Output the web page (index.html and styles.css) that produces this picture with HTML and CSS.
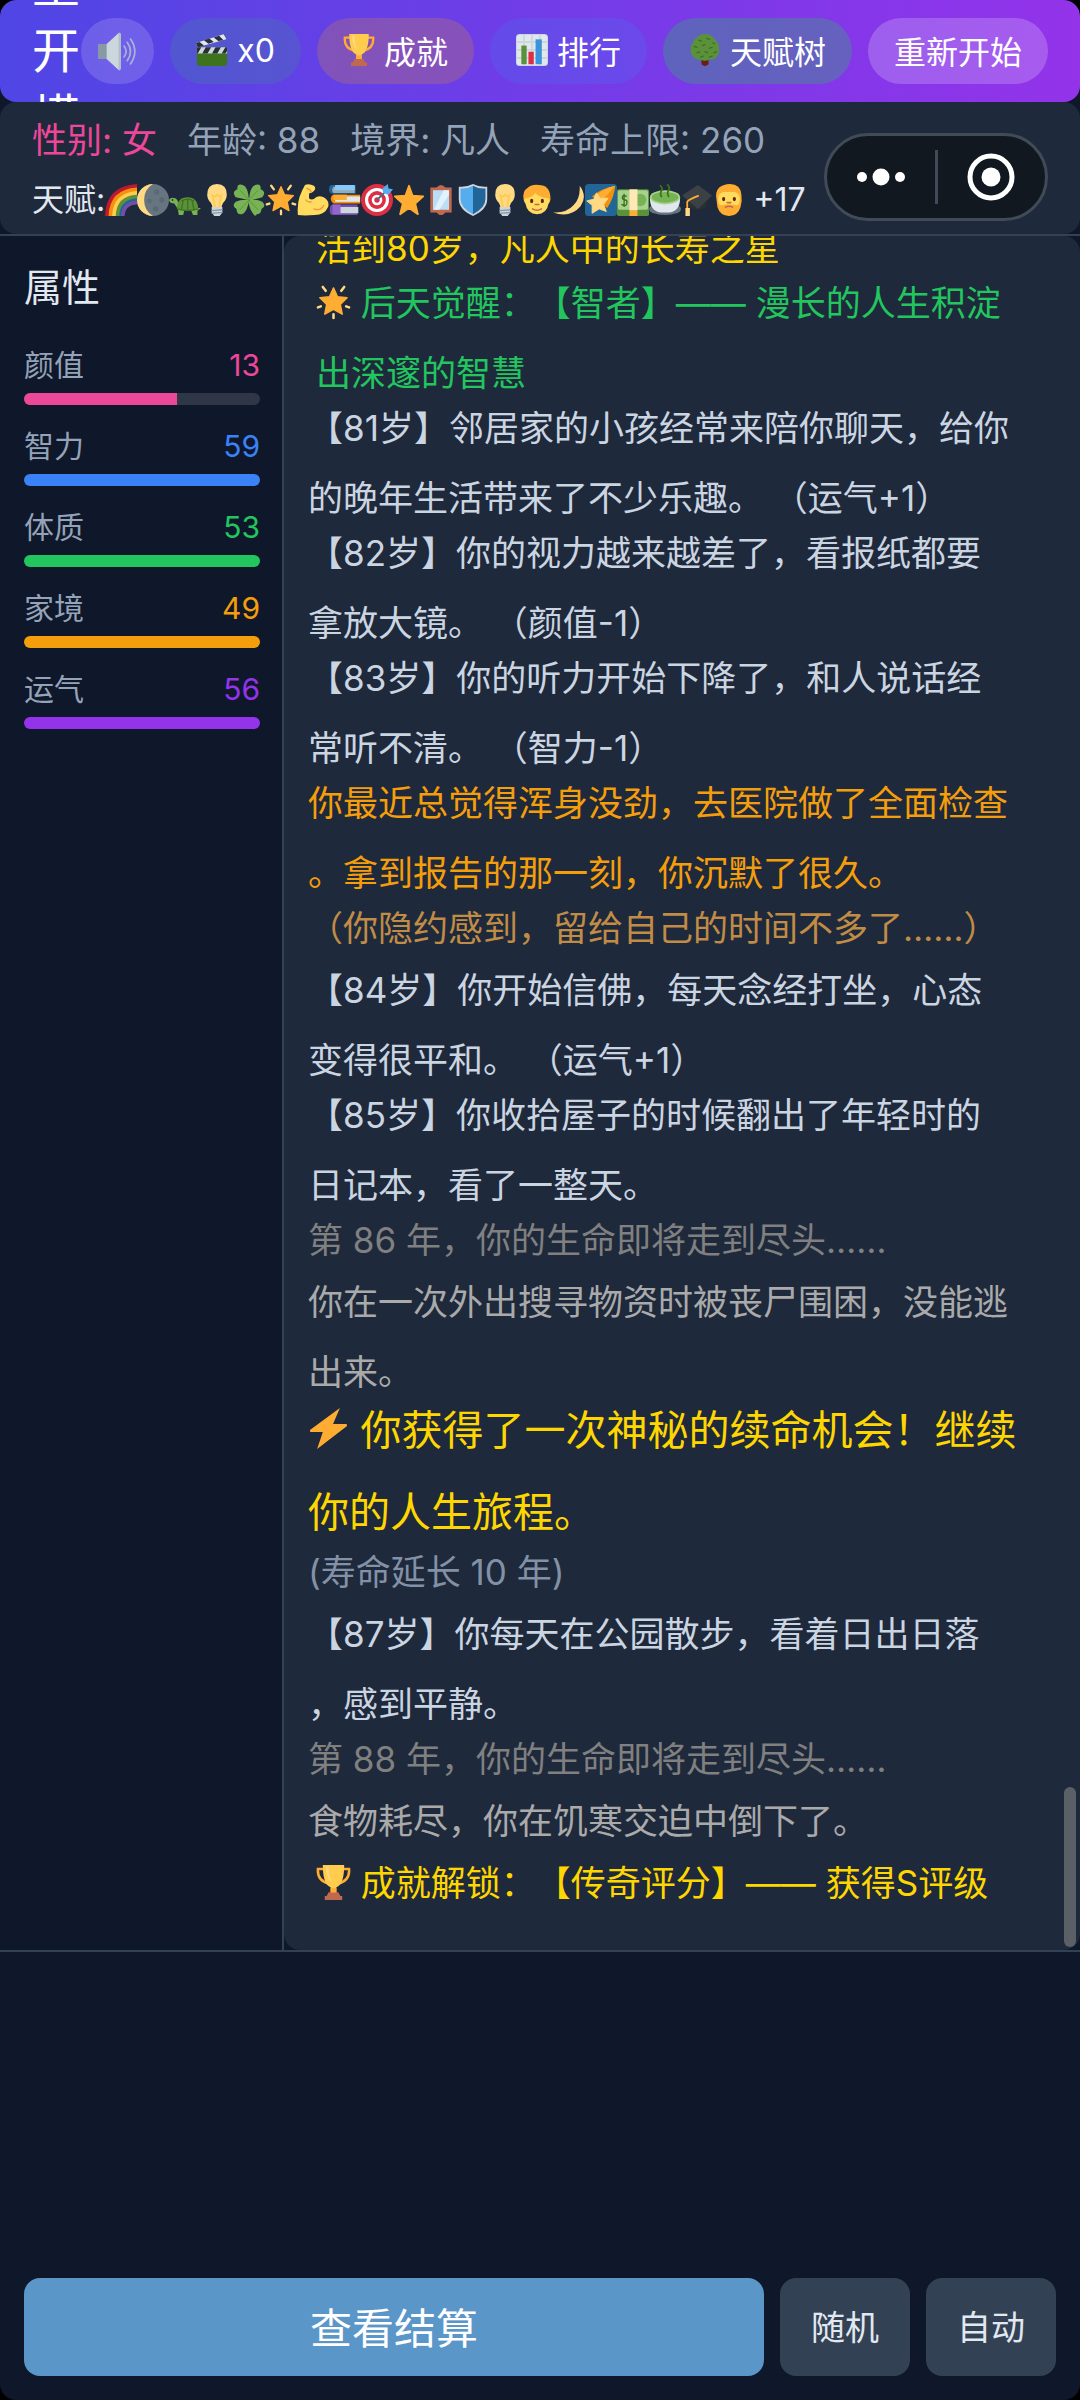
FILE: index.html
```html
<!DOCTYPE html>
<html lang="zh-CN">
<head>
    <meta charset="UTF-8">
    <meta name="viewport" content="width=device-width, initial-scale=1.0">
    <title>人生重开模拟器</title>
    <link rel="stylesheet" href="styles.css">
</head>
<body>
    <!-- 图标库 -->
    <svg class="sprite" aria-hidden="true">
        <symbol id="i-sound" viewBox="0 0 36 36">
            <path fill="#8899A6" d="M1 11h9v14H1q-1 0-1-1V12q0-1 1-1z"/>
            <path fill="#CCD6DD" d="M8 11L19 1q2-1 2 2v30q0 3-2 2L8 25z"/>
            <path fill="#B0BEC8" d="M19 1q2-1 2 2v30q0 3-2 2z"/>
            <path fill="none" stroke="#A9B1D6" stroke-width="1.6" stroke-linecap="round" d="M24 13q4 5 0 10M27 9.500q6 8.500 0 17M30 6.500q8 11.500 0 23"/>
        </symbol>
        <symbol id="i-clapper" viewBox="0 0 36 36">
            <path fill="#3E721D" d="M1 15h34v17q0 4-4 4H5q-4 0-4-4z"/>
            <path fill="#CCD6DD" d="M1 15h34v7H1z"/>
            <path fill="#292F33" d="M1 15h5l-4 7H1zM11 15h6l-4 7H7zM22 15h6l-4 7h-6zM33 15h2v4l-2 3h-4z"/>
            <path fill="#E1E8ED" d="M0 10L32 0l2 6L2 15z"/>
            <path fill="#292F33" d="M0 10l4-1 5 4-6 2-1 0zM9 7l6-2 5 4-6 2zM20 4l6-2 5 5-6 1zM31 0l1 0 2 5z"/>
        </symbol>
        <symbol id="i-trophy" viewBox="0 0 36 36">
            <path fill="none" stroke="#FFAC33" stroke-width="2.600" d="M9 4H2q-1 12 11 15M27 4h7q1 12-11 15"/>
            <path fill="#FFCC4D" d="M7 0h22q0 20-8 23v6h-6v-6Q7 20 7 0z"/>
            <path fill="#FFD983" d="M10 2h3q0 10 3 16-5-4-6-16z"/>
            <path fill="#C1694F" d="M13 28h10l2 4h2v4H9v-4h2z"/>
            <path fill="#FFAC33" d="M15 24h6v4h-6z"/>
        </symbol>
        <symbol id="i-chart" viewBox="0 0 36 36">
            <rect width="36" height="36" rx="4" fill="#CCD6DD"/>
            <rect x="1" y="1" width="34" height="34" rx="3" fill="#E1E8ED"/>
            <path stroke="#CCD6DD" stroke-width="2" d="M0 9h36M0 18h36M0 27h36M9 0v36M18 0v36M27 0v36"/>
            <rect x="6" y="13" width="6" height="21" fill="#5C913B"/>
            <rect x="14" y="20" width="6" height="14" fill="#DD2E44"/>
            <rect x="22" y="6" width="7" height="28" fill="#3B94D9"/>
        </symbol>
        <symbol id="i-tree" viewBox="0 0 36 36">
            <path fill="#662113" d="M14 28h8v6q-4 4-8 0z"/>
            <path fill="#5C913B" d="M18 0q7 0 11 6 6 6 5 14-2 9-11 9-5 2-10 0-9 0-11-9Q1 12 7 6q4-6 11-6z"/>
            <path fill="none" stroke="#3E721D" stroke-width="1.500" stroke-linecap="round" d="M11 7l3 1M20 5l3 1M27 10l2 1M6 14l3 1M15 13l3-1M23 16l3-1M9 21l3-1M18 20l3 1M28 21l3-1M13 26l3-1M23 26l3-1"/>
        </symbol>
        <symbol id="i-rainbow" viewBox="0 0 36 36">
            <path fill="#BE1931" d="M0 36Q1 2 36 0v36z"/>
            <path fill="#F4900C" d="M4 36Q5 6 36 4v32z"/>
            <path fill="#FFCC4D" d="M8 36Q9 10 36 8v28z"/>
            <path fill="#5C913B" d="M12 36q1-23 24-24v24z"/>
            <path fill="#226699" d="M16 36q1-19 20-20v20z"/>
            <path fill="#744EAA" d="M18 36q1-17 18-17v17z"/>
            <path fill="#1e293b" d="M22 36q1-13 14-13v13z"/>
        </symbol>
        <symbol id="i-moon" viewBox="0 0 36 36">
            <circle cx="18" cy="18" r="18" fill="#66757F"/>
            <path fill="#FFD983" d="M18 0a18 18 0 0 0 0 36Q8 30 8 18T18 0z"/>
            <circle cx="22" cy="9" r="3" fill="#5B6876"/><circle cx="14" cy="19" r="2.500" fill="#5B6876"/>
            <circle cx="28" cy="18" r="3" fill="#5B6876"/><circle cx="21" cy="28" r="3" fill="#5B6876"/>
        </symbol>
        <symbol id="i-turtle" viewBox="0 0 36 36">
            <path fill="#77B255" d="M7 16q3 1 4 8l19 3 6 0-4 3 0 5h-5l-2-5H17l-1 5h-5l-1-7q-3-4-4-6-5 0-6-4 2-4 7-2z"/>
            <path fill="#5C913B" d="M9 28q0-13 12-13 11 0 12 13-12 4-24 0z"/>
            <path fill="none" stroke="#3E721D" stroke-width="1.500" d="M14 19q7-4 14 0M16 18l-2 11M21 16v14M26 18l2 11M9 28q12 4 24 0"/>
            <circle cx="4" cy="18" r="1" fill="#292F33"/>
        </symbol>
        <symbol id="i-bulb" viewBox="0 0 36 36">
            <path fill="#FFD983" d="M18 0q11 0 11 12 0 5-4 9-2 3-2 6H13q0-3-2-6-4-4-4-9Q7 0 18 0z"/>
            <path fill="none" stroke="#FFCC4D" stroke-width="2" d="M16 27l-3-14q3 2 5-1 2 3 5 1l-3 14"/>
            <path fill="#CCD6DD" d="M12 26h12v6l-3 4h-6l-3-4z"/>
            <path stroke="#8899A6" stroke-width="1.500" d="M12 30l12-1M12 33l12-1"/>
        </symbol>
        <symbol id="i-clover" viewBox="0 0 36 36">
            <path fill="none" stroke="#77B255" stroke-width="3" stroke-linecap="round" d="M18 17q2 12 7 17"/>
            <path fill="#77B255" d="M18 18Q12 17 3 15q-5-6 2-9-1-7 6-5 6 2 7 17zM18 18Q19 3 25 1q7-2 6 5 7 3 2 9-9 3-15 3zM18 18Q9 17 3 20q-5 5 1 8 0 7 6 6 6-2 8-16zM18 18q9-1 15 2 5 5-1 8 0 6-6 6-6-4-8-16z"/>
            <path fill="none" stroke="#5C913B" stroke-width="1" d="M8 7l10 11 10-11M8 29l10-11 10 11"/>
        </symbol>
        <symbol id="i-glow" viewBox="0 0 36 36">
            <path fill="#FFAC33" d="M18 3l4 9 10 1-7 7 2 10-9-5-9 5 2-10-7-7 10-1z" stroke="#FFAC33" stroke-width="1.500" stroke-linejoin="round"/>
            <path fill="none" stroke="#FFD983" stroke-width="2.600" stroke-linecap="round" d="M7 2l3 4M29 2l-3 4M2 23l3-1M34 23l-3-1M18 30v4"/>
        </symbol>
        <symbol id="i-arm" viewBox="0 0 36 36">
            <path fill="#FFDC5D" d="M9 1q5-2 10 1 3 3 0 6-3 3-5 2-1 4 0 7 3 1 5 0 4-5 11-2 7 4 5 11-4 9-15 9-12 1-19 0Q0 22 3 14 6 6 9 1z"/>
            <path fill="none" stroke="#EF9645" stroke-width="1.500" stroke-linecap="round" d="M10 18q2 3 6 2M19 28q8 3 11-4M11 5q4 1 5 4"/>
        </symbol>
        <symbol id="i-books" viewBox="0 0 36 36">
            <path fill="#226699" d="M3 1h27v10H4q-4 0-4-5t3-5z"/><path fill="#99AAB5" d="M5 3h24v7H5q-3-3 0-7z"/><path fill="#88C9F9" d="M7 1h22v6H6z"/>
            <path fill="#F4900C" d="M5 12h30v10H6q-3 0-4-5 0-4 3-5z"/><path fill="#E1E8ED" d="M7 14h28v6H7z"/><path fill="#FFAC33" d="M5 12h15v6H5z"/>
            <path fill="#744EAA" d="M4 23h28v12H4q-4-1-3-7 0-4 3-5z"/><path fill="#CCD6DD" d="M7 26h26v7H7q-3-3 0-7z"/><path fill="#9266CC" d="M4 23h9v11H4z"/>
        </symbol>
        <symbol id="i-target" viewBox="0 0 36 36">
            <circle cx="18" cy="18" r="18" fill="#DD2E44"/><circle cx="18" cy="18" r="13.500" fill="#fff"/>
            <circle cx="18" cy="18" r="10" fill="#DD2E44"/><circle cx="18" cy="18" r="6" fill="#fff"/><circle cx="18" cy="18" r="3" fill="#DD2E44"/>
            <path stroke="#50698A" stroke-width="2" d="M18 18L29 7"/>
            <path fill="#55ACEE" d="M25 10l-1-5 6-5 1 5 5 1-5 6z"/>
        </symbol>
        <symbol id="i-star" viewBox="0 0 36 36">
            <path fill="#FFAC33" stroke="#FFAC33" stroke-width="2" stroke-linejoin="round" d="M18 2l4 11 12 1-9 8 3 12-10-7-10 7 3-12-9-8 12-1z"/>
        </symbol>
        <symbol id="i-mirror" viewBox="0 0 36 36">
            <path fill="#C1694F" d="M6 4h7q5-6 10 0h7v28h-7q-5 6-10 0H6z"/>
            <path fill="#BBDDF5" d="M9 7h18v22H9z"/>
            <path fill="#E1F2FC" d="M21 7h6v5L16 29h-6z"/>
        </symbol>
        <symbol id="i-shield" viewBox="0 0 36 36">
            <path fill="#CCD6DD" d="M18 0q8 4 16 3v14q0 12-16 19Q2 29 2 17V3q8 1 16-3z"/>
            <path fill="#55ACEE" d="M18 2Q11 6 4 5v12q0 10 14 17z"/>
            <path fill="#226699" d="M18 2q7 4 14 3v12q0 10-14 17z"/>
        </symbol>
        <symbol id="i-person" viewBox="0 0 36 36">
            <path fill="#FFAC33" d="M3 18Q1 8 8 4q4-4 12-3 12 0 13 13 1 5-3 9H6z"/>
            <path fill="#FFDC5D" d="M5 16q8-1 11-6 5 5 14 6 4 2 1 6-2 12-13 12T5 22q-3-4 0-6z"/>
            <ellipse cx="12" cy="19" rx="1.800" ry="2.500" fill="#662113"/><ellipse cx="24" cy="19" rx="1.800" ry="2.500" fill="#662113"/>
            <path fill="none" stroke="#C1694F" stroke-width="1.800" stroke-linecap="round" d="M16 23h4M13 28q5 3 10 0"/>
        </symbol>
        <symbol id="i-crescent" viewBox="0 0 36 36">
            <path fill="#FFD983" d="M30 2q9 12 1 23-12 14-31 7 15 1 23-8 8-8 7-22z"/>
        </symbol>
        <symbol id="i-comet" viewBox="0 0 36 36">
            <rect width="36" height="36" rx="4" fill="#226699"/>
            <path fill="#F4900C" d="M8 14Q18 5 34 2q-1 13-9 25z"/>
            <path fill="#FFAC33" d="M13 12Q22 5 34 2 28 9 20 18z"/>
            <path fill="#FFD983" stroke="#FFD983" stroke-linejoin="round" d="M13 10l4 6 9 0-5 7 3 8-8-3-8 5 0-9-6-5 8-2z"/>
        </symbol>
        <symbol id="i-money" viewBox="0 0 36 36">
            <rect y="6" width="36" height="30" rx="2" fill="#5C913B"/>
            <rect x="1" y="7" width="34" height="22" rx="2" fill="#A7D28B"/>
            <circle cx="26" cy="18" r="7" fill="#77B255"/>
            <path fill="#FFE8B6" d="M14 6h9v24h-9z"/><path fill="#FFAC33" d="M14 30h9v6h-9z"/>
            <path fill="none" stroke="#3E721D" stroke-width="1.500" d="M11 14q-5-2-5 1t3 3 2 4-6 1M8 11v15"/>
        </symbol>
        <symbol id="i-tea" viewBox="0 0 36 36">
            <ellipse cx="18" cy="28" rx="18" ry="7" fill="#66757F"/>
            <path fill="#E1E8ED" d="M1 15h34q0 16-12 17H13Q1 31 1 15z"/>
            <ellipse cx="18" cy="15" rx="17" ry="8" fill="#A7D28B"/>
            <ellipse cx="18" cy="15" rx="15" ry="6" fill="#77B255"/>
            <path fill="none" stroke="#3E721D" stroke-width="2" stroke-linecap="round" d="M13 2q3 3 1 6t0 6M21 1q3 3 1 6t0 7"/>
        </symbol>
        <symbol id="i-cap" viewBox="0 0 36 36">
            <path fill="#292F33" d="M7 14l11-5 11 6v10q-11 8-22 0z"/>
            <path fill="#3B4145" d="M1 13L19 1l16 12-16 15z"/>
            <path fill="none" stroke="#FFAC33" stroke-width="2" d="M20 13Q9 17 7 20v9"/>
            <path fill="#FFD983" d="M5 27h5v9H5z"/>
        </symbol>
        <symbol id="i-beard" viewBox="0 0 36 36">
            <path fill="#FFAC33" d="M4 18Q2 9 7 4q5-4 12-4 12 0 13 12 1 7-1 14-3 10-13 10T5 26z"/>
            <path fill="#FFDC5D" d="M6 15q1-5 6-6h12q5 1 6 6 1 5-2 9-4-1-10-1t-10 1q-3-4-2-9z"/>
            <ellipse cx="12" cy="17" rx="1.800" ry="2.300" fill="#662113"/><ellipse cx="24" cy="17" rx="1.800" ry="2.300" fill="#662113"/>
            <path fill="none" stroke="#C1694F" stroke-width="1.800" stroke-linecap="round" d="M16 21h4M14 26q4-2 8 0"/>
        </symbol>
        <symbol id="i-bolt" viewBox="0 0 36 36">
            <path fill="#FFAC33" d="M28 0L2 19q-1 2 1 2h10L8 36 34 16q1-2-1-2H22z"/>
        </symbol>
    </svg>

    <header class="topbar">
        <h1>人生重开模拟器</h1>
        <div class="actions">
            <button type="button" class="btn-sound" aria-label="声音"><svg class="icon"><use href="#i-sound"/></svg></button>
            <button type="button" class="btn-ad"><svg class="icon"><use href="#i-clapper"/></svg>x0</button>
            <button type="button" class="btn-achieve"><svg class="icon"><use href="#i-trophy"/></svg>成就</button>
            <button type="button" class="btn-rank"><svg class="icon"><use href="#i-chart"/></svg>排行</button>
            <button type="button" class="btn-tree"><svg class="icon"><use href="#i-tree"/></svg>天赋树</button>
            <button type="button" class="btn-restart">重新开始</button>
        </div>
    </header>

    <section class="status">
        <div class="status-box">
            <div class="info">
                <span class="female">性别: 女</span>
                <span>年龄: 88</span>
                <span>境界: 凡人</span>
                <span>寿命上限: 260</span>
            </div>
            <div class="talents">
                <span>天赋:</span>
                <svg class="icon"><use href="#i-rainbow"/></svg>
                <svg class="icon"><use href="#i-moon"/></svg>
                <svg class="icon"><use href="#i-turtle"/></svg>
                <svg class="icon"><use href="#i-bulb"/></svg>
                <svg class="icon"><use href="#i-clover"/></svg>
                <svg class="icon"><use href="#i-glow"/></svg>
                <svg class="icon"><use href="#i-arm"/></svg>
                <svg class="icon"><use href="#i-books"/></svg>
                <svg class="icon"><use href="#i-target"/></svg>
                <svg class="icon"><use href="#i-star"/></svg>
                <svg class="icon"><use href="#i-mirror"/></svg>
                <svg class="icon"><use href="#i-shield"/></svg>
                <svg class="icon"><use href="#i-bulb"/></svg>
                <svg class="icon"><use href="#i-person"/></svg>
                <svg class="icon"><use href="#i-crescent"/></svg>
                <svg class="icon"><use href="#i-comet"/></svg>
                <svg class="icon"><use href="#i-money"/></svg>
                <svg class="icon"><use href="#i-tea"/></svg>
                <svg class="icon"><use href="#i-cap"/></svg>
                <svg class="icon"><use href="#i-beard"/></svg>
                <span class="more">+17</span>
            </div>
        </div>
        <!-- 小程序胶囊按钮 -->
        <div class="capsule">
            <button type="button" aria-label="更多">
                <svg width="48" height="18" viewBox="0 0 48 18" fill="#fff"><circle cx="5" cy="9" r="5"/><circle cx="24" cy="9" r="8.500"/><circle cx="43" cy="9" r="5"/></svg>
            </button>
            <button type="button" aria-label="关闭">
                <svg width="48" height="48" viewBox="0 0 48 48"><circle cx="24" cy="24" r="21" fill="none" stroke="#fff" stroke-width="5"/><circle cx="24" cy="24" r="9.500" fill="#fff"/></svg>
            </button>
        </div>
    </section>

    <main>
        <aside class="attrs">
            <h2>属性</h2>
            <div class="attr pink">
                <div class="attr-row"><span>颜值</span><b>13</b></div>
                <div class="bar"><div style="width: 65%"></div></div>
            </div>
            <div class="attr blue">
                <div class="attr-row"><span>智力</span><b>59</b></div>
                <div class="bar"><div style="width: 100%"></div></div>
            </div>
            <div class="attr green">
                <div class="attr-row"><span>体质</span><b>53</b></div>
                <div class="bar"><div style="width: 100%"></div></div>
            </div>
            <div class="attr orange">
                <div class="attr-row"><span>家境</span><b>49</b></div>
                <div class="bar"><div style="width: 100%"></div></div>
            </div>
            <div class="attr purple">
                <div class="attr-row"><span>运气</span><b>56</b></div>
                <div class="bar"><div style="width: 100%"></div></div>
            </div>
        </aside>

        <section class="log">
            <p class="gold tag multi">活到80岁，凡人中的长寿之星</p>
            <p class="awake tag multi"><svg class="icon"><use href="#i-glow"/></svg> 后天觉醒：【智者】—— 漫长的人生积淀出深邃的智慧</p>
            <p class="multi">【81岁】邻居家的小孩经常来陪你聊天，给你的晚年生活带来了不少乐趣。 （运气+1）</p>
            <p class="multi">【82岁】你的视力越来越差了，看报纸都要拿放大镜。 （颜值-1）</p>
            <p class="multi">【83岁】你的听力开始下降了，和人说话经常听不清。 （智力-1）</p>
            <p class="warn multi">你最近总觉得浑身没劲，去医院做了全面检查。拿到报告的那一刻，你沉默了很久。</p>
            <p class="hint">（你隐约感到，留给自己的时间不多了……）</p>
            <p class="multi">【84岁】你开始信佛，每天念经打坐，心态变得很平和。 （运气+1）</p>
            <p class="multi">【85岁】你收拾屋子的时候翻出了年轻时的日记本，看了一整天。</p>
            <p class="end">第 86 年，你的生命即将走到尽头……</p>
            <p class="death multi">你在一次外出搜寻物资时被丧尸围困，没能逃出来。</p>
            <p class="gold big"><svg class="icon"><use href="#i-bolt"/></svg> 你获得了一次神秘的续命机会！继续你的人生旅程。</p>
            <p class="note">(寿命延长 10 年)</p>
            <p class="multi">【87岁】你每天在公园散步，看着日出日落，感到平静。</p>
            <p class="end">第 88 年，你的生命即将走到尽头……</p>
            <p class="death">食物耗尽，你在饥寒交迫中倒下了。</p>
            <p class="gold tag"><svg class="icon"><use href="#i-trophy"/></svg> 成就解锁：【传奇评分】—— 获得S评级</p>
            <div class="thumb"></div>
        </section>
    </main>

    <footer>
        <div class="choices"></div>
        <div class="controls">
            <button type="button" class="btn-main">查看结算</button>
            <button type="button">随机</button>
            <button type="button">自动</button>
        </div>
    </footer>
</body>
</html>
```
FILE: styles.css
```css
* {
    box-sizing: border-box;
}
html {
    background: #000;
}
body {
    margin: 0;
    height: 100vh;
    display: flex;
    flex-direction: column;
    overflow: hidden;
    background: #0f172a;
    border-radius: 16px;
    color: #e2e8f0;
    font-family: Inter, "Noto Sans CJK SC", sans-serif;
    text-spacing-trim: space-all;
}
button {
    border: none;
    margin: 0;
    font-family: inherit;
    cursor: pointer;
}
h1, h2, p {
    margin: 0;
    font-weight: 400;
}
.sprite {
    position: absolute;
    width: 0;
    height: 0;
}
.icon {
    width: 1em;
    height: 1em;
    flex-shrink: 0;
}

/* 顶栏 */
.topbar {
    display: flex;
    align-items: center;
    justify-content: space-between;
    padding: 18px 32px;
    overflow: hidden;
    flex-shrink: 0;
    border-radius: 16px;
    background: linear-gradient(90deg, #4f46e5, #9333ea);
    color: #fff;
}
.topbar h1 {
    display: flex;
    align-items: center;
    width: 48px;
    height: 66px;
    font-size: 48px;
    line-height: 66px;
}
.actions {
    display: flex;
    gap: 16px;
}
.actions button {
    display: flex;
    align-items: center;
    gap: 9px;
    height: 66px;
    padding: 0 26px 2px;
    border-radius: 33px;
    font-size: 32px;
    color: #fff;
    background: rgba(255, 255, 255, 0.2);
}
.actions .btn-sound {
    padding: 0 17px;
    font-size: 39px;
    background: rgba(255, 255, 255, 0.15);
}
.actions .btn-ad { background: rgba(34, 197, 94, 0.15); }
.actions .btn-achieve { background: rgba(245, 158, 11, 0.2); }
.actions .btn-rank { background: rgba(59, 130, 246, 0.2); }
.actions .btn-tree { background: rgba(34, 197, 94, 0.3); }

/* 状态栏 */
.status {
    position: relative;
    flex-shrink: 0;
    border-bottom: 2px solid #334155;
}
.status-box {
    padding: 12px 32px 14px;
    background: #1e293b;
    border-radius: 16px;
}
.info {
    display: flex;
    gap: 30px;
    font-size: 35px;
    line-height: 52px;
    color: #94a3b8;
}
.info .female {
    color: #ec4899;
}
.talents {
    display: flex;
    align-items: center;
    margin-top: 14px;
    font-size: 32px;
    line-height: 40px;
}
.talents .more {
    margin-left: 8px;
}
.capsule {
    position: absolute;
    top: 31px;
    right: 32px;
    display: flex;
    width: 224px;
    height: 88px;
    padding: 14px 0;
    border: 3px solid #414b57;
    border-radius: 44px;
    background: #111820;
}
.capsule button {
    flex: 1;
    display: flex;
    align-items: center;
    justify-content: center;
    padding: 0;
    background: none;
}
.capsule button + button {
    border-left: 3px solid #414b57;
}

/* 主体 */
main {
    flex: 1;
    min-height: 0;
    display: flex;
}
.attrs {
    width: 284px;
    flex-shrink: 0;
    padding: 24px 22px 24px 24px;
    border-right: 2px solid #334155;
}
.attrs h2 {
    margin-bottom: 31px;
    font-size: 38px;
    line-height: 54px;
}
.attr {
    margin-bottom: 21px;
}
.attr-row {
    display: flex;
    justify-content: space-between;
    margin-bottom: 8px;
    font-size: 30px;
    line-height: 40px;
    color: #94a3b8;
}
.attr-row b {
    font-weight: 400;
}
.bar {
    height: 12px;
    border-radius: 6px;
    overflow: hidden;
    background: #2f3646;
}
.bar div {
    height: 100%;
}
.pink b { color: #ec4899; }
.pink .bar div { background: #ec4899; }
.blue b { color: #3b82f6; }
.blue .bar div { background: #3b82f6; }
.green b { color: #22c55e; }
.green .bar div { background: #22c55e; }
.orange b { color: #f59e0b; }
.orange .bar div { background: #f59e0b; }
.purple b { color: #9333ea; }
.purple .bar div { background: #9333ea; }

/* 人生记录，始终贴底显示 */
.log {
    position: relative;
    flex: 1;
    min-width: 0;
    display: flex;
    flex-direction: column;
    justify-content: flex-end;
    padding: 0 68px 40px 24px;
    overflow: hidden;
    border-radius: 16px;
    background: #1e293b;
    color: #cbd5e1;
    font-size: 35px;
    line-height: 70px;
    line-break: anywhere;
}
.log p {
    flex-shrink: 0;
    margin-bottom: -8px;
}
.log .multi {
    margin-bottom: -15px;
}
.log .icon {
    vertical-align: -4px;
}
.log .tag {
    padding-left: 8px;
}
.log .gold { color: #ffd700; }
.log .awake { color: #22c55e; }
.log .warn { color: #f59e0b; }
.log .hint { color: #c08c46; }
.log .end { color: #808080; }
.log .death { color: #aaa; }
.log .note { color: #8391a6; }
.log .big {
    margin: -3px -16px -16px 0;
    font-size: 41px;
    line-height: 82px;
}
.thumb {
    position: absolute;
    right: 4px;
    bottom: 3px;
    width: 12px;
    height: 160px;
    border-radius: 6px;
    background: #5b6066;
}

/* 底部操作 */
footer {
    flex-shrink: 0;
    padding: 24px;
    border-top: 2px solid #334155;
}
.choices {
    min-height: 302px;
}
.controls {
    display: flex;
    gap: 16px;
}
.controls button {
    height: 98px;
    padding: 0 31px 4px;
    border-radius: 16px;
    font-size: 34px;
    color: #e2e8f0;
    background: #334155;
}
.controls .btn-main {
    flex: 1;
    font-size: 42px;
    color: #fff;
    background: #5b96c9;
}
```
